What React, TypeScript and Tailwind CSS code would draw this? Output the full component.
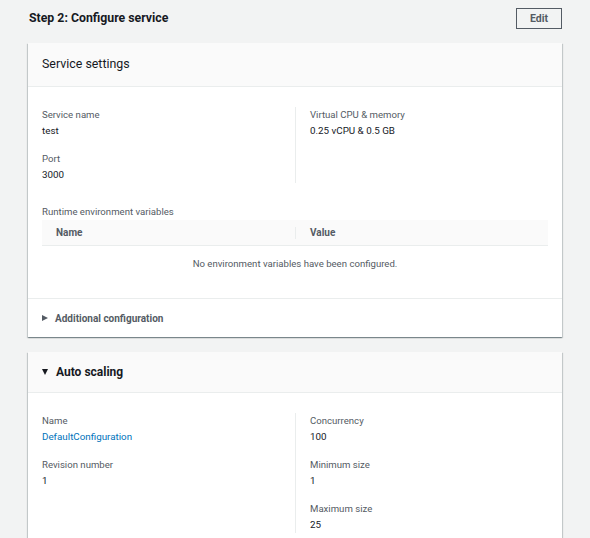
import React from "react";

const font = { fontFamily: "Roboto, 'Liberation Sans', Arial, sans-serif" };

const Field = ({ label, value, link }: { label: string; value: string; link?: boolean }) => (
  <div className="flex flex-col">
    <div className="text-[9.6px] leading-4 text-[#545b64]">{label}</div>
    <div className={`text-[9.8px] leading-4 ${link ? "text-[#0073bb]" : "text-[#16191f]"}`}>{value}</div>
  </div>
);

const cardShadow =
  "bg-white shadow-[0_1px_1px_0_rgba(0,28,36,0.3),1px_1px_1px_0_rgba(0,28,36,0.15),-1px_1px_1px_0_rgba(0,28,36,0.15)]";

export default function App() {
  return (
    <div className="min-h-screen bg-[#f2f3f3] px-[28px] pt-[8px]" style={font}>
      <div className="flex h-[21px] items-center justify-between">
        <h2 className="-mt-px pl-px text-[12.3px] font-bold text-[#16191f]">Step 2: Configure service</h2>
        <button className="flex h-[21px] w-[46px] items-center justify-center border border-[#545b64] text-[10.5px] font-bold text-[#545b64]">
          Edit
        </button>
      </div>

      <div className={`mt-[14px] ${cardShadow}`}>
        <div className="flex h-[44px] items-center border-b border-[#eaeded] bg-[#fafafa] px-[14px] text-[12.4px] text-[#16191f]">
          Service settings
        </div>
        <div className="px-[14px] pt-[20px]">
          <div className="grid grid-cols-2">
            <div className="flex flex-col gap-[12px] pr-[14px]">
              <Field label="Service name" value="test" />
              <Field label="Port" value="3000" />
            </div>
            <div className="flex flex-col gap-[12px] border-l border-[#eaeded] pl-[14px]">
              <Field label="Virtual CPU & memory" value="0.25 vCPU & 0.5 GB" />
            </div>
          </div>
          <div className="mt-[21px] text-[9.6px] leading-4 text-[#545b64]">Runtime environment variables</div>
          <div className="flex h-[26px] items-center border-b border-[#eaeded] bg-[#fafafa] text-[10px] font-bold text-[#545b64]">
            <div className="w-1/2 px-[14px]">Name</div>
            <div className="flex w-1/2 items-center">
              <span className="h-[12px] w-px bg-[#eaeded]" />
              <span className="ml-[14px]">Value</span>
            </div>
          </div>
          <div className="pb-[26px] pt-[10px] text-center text-[9.6px] leading-4 text-[#545b64]">
            No environment variables have been configured.
          </div>
        </div>
        <div className="flex h-[39px] items-center gap-[7px] border-t border-[#eaeded] px-[14px] text-[10px] font-bold text-[#545b64]">
          <span className="h-0 w-0 border-y-[3.5px] border-l-[6px] border-y-transparent border-l-[#545b64]" />
          <span>Additional configuration</span>
        </div>
      </div>

      <div className={`mt-[15px] ${cardShadow}`}>
        <div className="flex h-[41px] items-center gap-[8px] border-b border-[#eaeded] bg-[#fafafa] px-[14px] text-[12px] font-bold text-[#16191f]">
          <span className="h-0 w-0 border-x-[3.5px] border-t-[6px] border-x-transparent border-t-[#16191f]" />
          <span>Auto scaling</span>
        </div>
        <div className="px-[14px] pb-[20px] pt-[20px]">
          <div className="grid grid-cols-2">
            <div className="flex flex-col gap-[12px] pr-[14px]">
              <Field label="Name" value="DefaultConfiguration" link />
              <Field label="Revision number" value="1" />
            </div>
            <div className="flex flex-col gap-[12px] border-l border-[#eaeded] pl-[14px]">
              <Field label="Concurrency" value="100" />
              <Field label="Minimum size" value="1" />
              <Field label="Maximum size" value="25" />
            </div>
          </div>
        </div>
      </div>
    </div>
  );
}
